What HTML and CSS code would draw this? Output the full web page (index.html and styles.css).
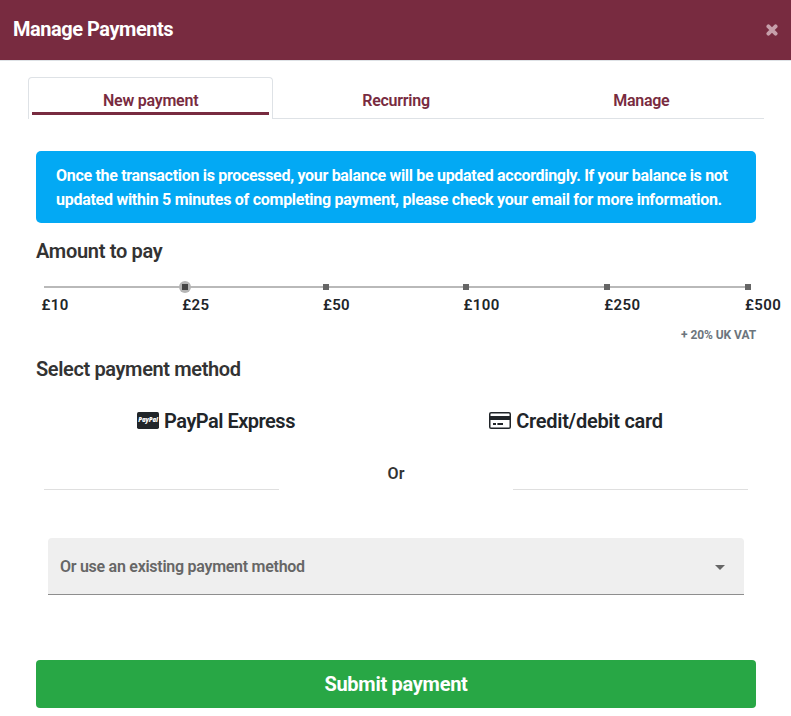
FILE: index.html
```html
<!DOCTYPE html>
<html lang="en">
<head>
<meta charset="utf-8">
<title>Manage Payments</title>
<link rel="stylesheet" href="styles.css">
</head>
<body>
<header class="header">
  <h1 class="title">Manage Payments</h1>
  <button class="close" aria-label="Close"><svg width="12" height="12" viewBox="0 0 12 12"><path d="M2.4 2.4 9.6 9.6M9.6 2.4 2.4 9.6" stroke="currentColor" stroke-width="3.9" stroke-linecap="round"/></svg></button>
</header>
<nav class="tabs">
  <a class="tab active"><span>New payment</span></a>
  <a class="tab"><span>Recurring</span></a>
  <a class="tab"><span>Manage</span></a>
</nav>
<main class="content">
  <div class="alert"><div class="line1">Once the transaction is processed, your balance will be updated accordingly. If your balance is not</div><div class="line2">updated within 5 minutes of completing payment, please check your email for more information.</div></div>
  <h2 class="heading amount">Amount to pay</h2>
  <div class="slider">
    <div class="track"><i></i><i class="thumb"></i><i></i><i></i><i></i><i></i></div>
    <div class="labels"><span>£10</span><span>£25</span><span>£50</span><span>£100</span><span>£250</span><span>£500</span></div>
  </div>
  <div class="vat">+ 20% UK VAT</div>
  <h2 class="heading method">Select payment method</h2>
  <div class="methods">
    <div class="option"><svg width="22" height="17" viewBox="0 0 22 17"><rect width="22" height="17" rx="1.7" fill="#212529"/><text x="1.2" y="10.3" class="paypal">PayPal</text></svg><span class="paypal-label">PayPal Express</span></div>
    <div class="option"><svg width="22" height="17" viewBox="0 0 22 17"><rect x=".75" y=".75" width="20.5" height="15.5" rx="1.3" fill="none" stroke="#212529" stroke-width="1.5"/><path d="M1 4h20v4H1zM4 11h3v2H4zM8.4 11h5.6v2H8.4z" fill="#212529"/></svg><span class="card-label">Credit/debit card</span></div>
  </div>
  <div class="divider"><hr><span>Or</span><hr></div>
  <div class="select"><span>Or use an existing payment method</span><svg width="10" height="5" viewBox="0 0 10 5"><path d="M0 0h10L5 5z" fill="#666"/></svg></div>
  <button class="submit">Submit payment</button>
</main>
</body>
</html>
```
FILE: styles.css
```css
* { box-sizing: border-box; }
body { margin: 0; width: 791px; height: 716px; overflow: hidden; background: #fff; color: #212529; font-family: Roboto, "Noto Sans", sans-serif; font-weight: 600; font-size: 16px; white-space: nowrap; }
h1, h2 { margin: 0; }
button { border: 0; padding: 0; font: inherit; }
.header { height: 61px; padding: 0 13px; display: flex; align-items: center; justify-content: space-between; background: #782b40; color: #fff; border-bottom: 1px solid #dee2e6; }
.title { margin-top: -2px; font-size: 20px; font-weight: 700; line-height: 30px; letter-spacing: -.47px; }
.close { width: 12px; height: 12px; margin-top: -1px; background: none; color: #c69faa; }
.close svg { display: block; }
.tabs { display: grid; grid-template-columns: repeat(3, 1fr); margin: 16px 27px 0 28px; height: 42px; }
.tab { padding-top: 12px; line-height: 24px; text-align: center; color: #782b40; border-bottom: 1px solid #dee2e6; letter-spacing: -.25px; }
.tab.active { border: 1px solid #dee2e6; border-bottom: 0; border-radius: 4px 4px 0 0; padding: 11px 3px 0; }
.tab.active span { display: block; height: 26px; border-bottom: 3px solid #782b40; }
.content { padding: 32px 35px 0 36px; }
.alert { height: 72px; padding: 13px 20px 11px; border-radius: 5px; background: #03a9f4; color: #fff; font-weight: 700; line-height: 24px; }
.line1 { letter-spacing: -.31px; }
.line2 { letter-spacing: -.27px; }
.heading { font-size: 20px; font-weight: 600; line-height: 24px; color: #333; }
.amount { margin-top: 16px; letter-spacing: -.3px; }
.slider { margin: 23px 8px 0; }
.track { display: flex; justify-content: space-between; align-items: center; height: 2px; margin: 0 -3px; background: linear-gradient(#b9b9b9, #b9b9b9) 3px 0 / 704px 2px no-repeat; }
.track i { width: 6px; height: 6px; background: #666; }
.track i:first-child { visibility: hidden; }
.track .thumb { width: 12px; height: 12px; margin: 0 -3px; border-radius: 50%; background: linear-gradient(#444, #444) center / 6px 6px no-repeat #b5b5b5; }
.labels { display: grid; grid-template-columns: repeat(5, 140.7px) 50px; margin: 5px 0 0 -2.5px; line-height: 24px; font-size: 15px; letter-spacing: .4px; }
.vat { margin-top: 8px; height: 20px; line-height: 20px; text-align: right; font-size: 12px; font-weight: 700; letter-spacing: -.08px; color: #6c757d; }
.method { margin-top: 12px; letter-spacing: -.37px; }
.methods { display: grid; grid-template-columns: 1fr 1fr; margin-top: 25px; }
.option { display: flex; justify-content: center; align-items: center; gap: 5px; height: 30px; font-size: 20px; }
.option svg { margin-top: -1px; }
.paypal-label { letter-spacing: -.5px; }
.card-label { letter-spacing: -.28px; }
.paypal { fill: #fff; font: italic 800 6.1px "Open Sans", sans-serif; letter-spacing: -.1px; }
.divider { display: grid; grid-template-columns: 235px 1fr 235px; margin: 26px 8px 0; height: 30px; color: #333; text-align: center; line-height: 24px; }
.divider hr { width: 100%; margin: 27px 0 0; border: 0; height: 1px; background: #dfdfdf; }
.select { display: flex; align-items: center; justify-content: space-between; margin: 46px 12px 0; height: 57px; padding: 0 19px 0 12px; background: #efefef; border-bottom: 1px solid #8e8e8e; border-radius: 4px 4px 0 0; color: #666; letter-spacing: -.27px; }
.select svg { margin-top: 2px; }
.submit { display: block; width: 100%; height: 48px; margin-top: 65px; background: #28a745; color: #fff; border-radius: 4px; font-size: 20px; font-weight: 700; letter-spacing: -.28px; }
```
